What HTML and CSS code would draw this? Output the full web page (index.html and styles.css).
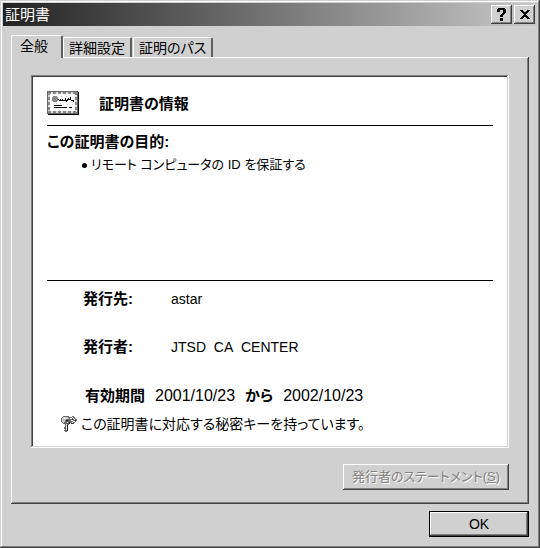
FILE: index.html
```html
<!DOCTYPE html>
<html lang="ja">
<head>
<meta charset="utf-8">
<title>証明書</title>
<link rel="stylesheet" href="styles.css">
</head>
<body>
<main class="window">
  <header class="titlebar">
    <h1 class="title">証明書</h1>
    <button class="caption-button" type="button" aria-label="ヘルプ">
      <svg width="10" height="13" viewBox="0 0 10 13" shape-rendering="crispEdges"><path d="M2 0h6v1h1v4h-1v1h-1v1h-1v2h-3v-2h1v-1h1v-1h1v-3h-3v2h-3v-3h1v-1h1zM3 10h3v3h-3z"/></svg>
    </button>
    <button class="caption-button" type="button" aria-label="閉じる">
      <svg width="10" height="9" viewBox="0 0 10 9" shape-rendering="crispEdges"><path d="M0 0h3v1h1v1h2v-1h1v-1h3v1h-1v1h-1v1h-1v1h-1v1h1v1h1v1h1v1h1v1h-3v-1h-1v-1h-2v1h-1v1h-3v-1h1v-1h1v-1h1v-1h1v-1h-1v-1h-1v-1h-1v-1h-1z"/></svg>
    </button>
  </header>

  <div class="content">
    <div class="tabs" role="tablist">
      <button class="tab tab-active" type="button" role="tab" aria-selected="true">全般</button>
      <button class="tab" type="button" role="tab" aria-selected="false">詳細設定</button>
      <button class="tab" type="button" role="tab" aria-selected="false">証明のパス</button>
    </div>

    <section class="panel" role="tabpanel">
      <div class="certificate">
        <div class="heading">
          <svg class="heading-icon" width="32" height="25" viewBox="0 0 32 25" shape-rendering="crispEdges">
            <path d="M1 1h31v23h-31z" fill="#000"/>
            <path d="M0 0h31v23h-31z" fill="#666"/>
            <path d="M1 1h29v21h-29z" fill="#ddd"/>
            <path d="M1 2h29M1 21h29M2 1v21M29 1v21" fill="none" stroke="#888" stroke-width="2" stroke-dasharray="3 2"/>
            <path d="M3 3h25v17h-25z" fill="#fff"/>
            <path d="M6 5h4v1h1v4h-1v1h-4v-1h-1v-4h1z" fill="#888"/>
            <path d="M11 8h1v1h-1zM12 9h1v1h-1zM13 8h1v2h-1zM14 9h2v1h-2zM15 8h1v2h-1zM16 9h2v1h-2zM18 7h1v3h-1zM19 9h1v2h-1zM20 8h1v2h-1zM21 7h1v2h-1zM22 8h2v1h-2zM23 6h1v3h-1zM24 9h1v1h-1zM25 9h2v1h-2zM26 10h1v1h-1z" fill="#000"/>
            <path d="M7 14h8v1h-8zM7 16h13v1h-13zM22 16h3v1h-3z" fill="#000"/>
            <path d="M9 12h1v1h-1zM13 12h1v1h-1zM20 13h1v1h-1zM25 13h1v1h-1zM14 5h1v1h-1zM19 5h1v1h-1z" fill="#ccc"/>
          </svg>
          <h2 class="heading-text">証明書の情報</h2>
        </div>

        <div class="purpose">
          <h3 class="purpose-title">この証明書の目的:</h3>
          <ul class="purpose-list">
            <li>リモート コンピュータの ID を保証する</li>
          </ul>
        </div>

        <dl class="details">
          <div class="detail"><dt>発行先:</dt><dd>astar</dd></div>
          <div class="detail"><dt>発行者:</dt><dd>JTSD&nbsp; CA&nbsp; CENTER</dd></div>
        </dl>
        <p class="validity"><b>有効期間</b><span>2001/10/23</span><b>から</b><span>2002/10/23</span></p>
        <p class="key-note">
          <svg width="16" height="16" viewBox="0 0 16 16" shape-rendering="crispEdges">
            <path d="M7 1h4v-1h2v1h1v1h1v1h1v2h-1v1h-1v1h-1v1h-3v-1h-1v-2h-2z" fill="#777"/>
            <path d="M9 2h2v1h-2zM11 1h1v1h-1zM12 2h1v1h-1zM13 3h1v1h-1zM10 4h2v1h-2zM12 5h2v1h-2zM11 6h1v1h-1z" fill="#fff"/>
            <path d="M11 3h1v1h-1zM14 4h1v1h-1zM10 7h3v1h-3z" fill="#333"/>
            <path d="M2 0h6v1h1v2h1v3h-1v2h-1v1h-1v6h-1v1h-2v-1h-1v-1h1v-1h-1v-2h1v-3h-2v-1h-1v-1h-1v-4h1v-1h1z" fill="#666"/>
            <path d="M2 1h5v1h1v1h-3v1h-1v2h-1v1h-1v-1h-1v-4h1z" fill="#ccc"/>
            <path d="M5 8h1v6h-1z" fill="#ddd"/>
            <path d="M3 2h2v1h-2zM6 6h1v1h-1z" fill="#fff"/>
            <path d="M5 4h2v1h-2zM6 9h1v6h-1zM8 6h1v2h-1z" fill="#222"/>
          </svg>
          <span>この証明書に対応する秘密キーを持っています。</span>
        </p>
      </div>
      <button class="button statement" type="button" disabled>発行者のステートメント(<u>S</u>)</button>
    </section>
    <button class="button ok" type="submit">OK</button>
  </div>
</main>
</body>
</html>
```
FILE: styles.css
```css
* {
  box-sizing: border-box;
}

body {
  margin: 0;
  color: #000;
  background: #d0d0d0;
  font: 14px/20px "Liberation Sans", "Noto Sans CJK JP", sans-serif;
  font-feature-settings: "palt";
}

h1, h2, h3, p, ul, dl, dd {
  margin: 0;
  padding: 0;
}

h1, h2, h3, dt, b {
  font-size: 15px;
}

button {
  padding: 0;
  border: 0;
  color: #000;
  background: #d0d0d0;
  font: inherit;
  font-feature-settings: inherit;
}

.window {
  display: flex;
  flex-direction: column;
  min-height: 100vh;
  padding: 3px;
  box-shadow: inset -1px -1px #404040, inset 1px 1px #d0d0d0,
    inset -2px -2px #808080, inset 2px 2px #fff;
}

.titlebar {
  display: flex;
  align-items: center;
  gap: 2px;
  height: 23px;
  padding: 0 2px;
  background: linear-gradient(to right, #222, #c8c8c8);
}

.title {
  flex: 1;
  color: #fff;
  font-weight: normal;
}

.caption-button {
  display: grid;
  place-items: center;
  width: 21px;
  height: 19px;
  box-shadow: inset -1px -1px #404040, inset 1px 1px #fff, inset -2px -2px #808080;
}

.content {
  display: flex;
  flex: 1;
  flex-direction: column;
  padding: 9px 8px 8px;
}

.tabs {
  display: flex;
  align-items: flex-end;
}

.tab {
  height: 20px;
  margin-right: 1px;
  padding: 0 5px;
  border: solid;
  border-width: 1px 2px 0 1px;
  border-color: #fff #606060 #fff #fff;
  border-radius: 2px 2px 0 0;
}

.tab-active {
  z-index: 1;
  height: 23px;
  margin: 0 0 -1px;
  padding: 0 13px 2px 8px;
}

.panel {
  display: flex;
  flex: 1;
  flex-direction: column;
  padding: 18px 20px 14px;
  box-shadow: inset -1px -1px #404040, inset 1px 1px #fff, inset -2px -2px #808080;
}

.certificate {
  display: flex;
  flex: 1;
  flex-direction: column;
  padding: 16px 16px 14px;
  background: #fff;
  box-shadow: inset -1px -1px #fff, inset 1px 1px #808080,
    inset -2px -2px #d0d0d0, inset 2px 2px #404040;
}

.heading {
  display: flex;
  align-items: center;
  gap: 20px;
  padding-bottom: 9px;
}

.purpose {
  flex: 1;
  padding-top: 6px;
  border: solid #000;
  border-width: 1px 0;
}

.purpose-list {
  padding: 3px 0 0 44px;
  font-size: 13px;
  list-style: none;
}

.purpose-list li {
  position: relative;
}

.purpose-list li::before {
  position: absolute;
  top: 8px;
  left: -9px;
  width: 5px;
  height: 5px;
  border-radius: 50%;
  background: #000;
  content: "";
}

.details {
  display: grid;
  gap: 28px;
  padding: 8px 0 29px 36px;
}

.detail {
  display: grid;
  grid-template-columns: 88px 1fr;
}

.detail dt {
  font-weight: bold;
}

.validity {
  display: flex;
  gap: 10px;
  padding-left: 38px;
  font-size: 16px;
}

.key-note {
  display: flex;
  align-items: center;
  gap: 4px;
  padding: 8px 0 0 14px;
}

.button {
  align-self: flex-end;
  height: 26px;
}

.statement {
  margin-top: 16px;
  padding: 0 9px;
  color: #808080;
  font-size: 13px;
  box-shadow: inset -1px -1px #404040, inset 1px 1px #fff, inset -2px -2px #808080;
  text-shadow: 1px 1px #fff;
}

.ok {
  width: 100px;
  margin-top: 7px;
  border: 1px solid #000;
  box-shadow: inset -1px -1px #404040, inset 1px 1px #fff, inset -2px -2px #808080;
}
```
